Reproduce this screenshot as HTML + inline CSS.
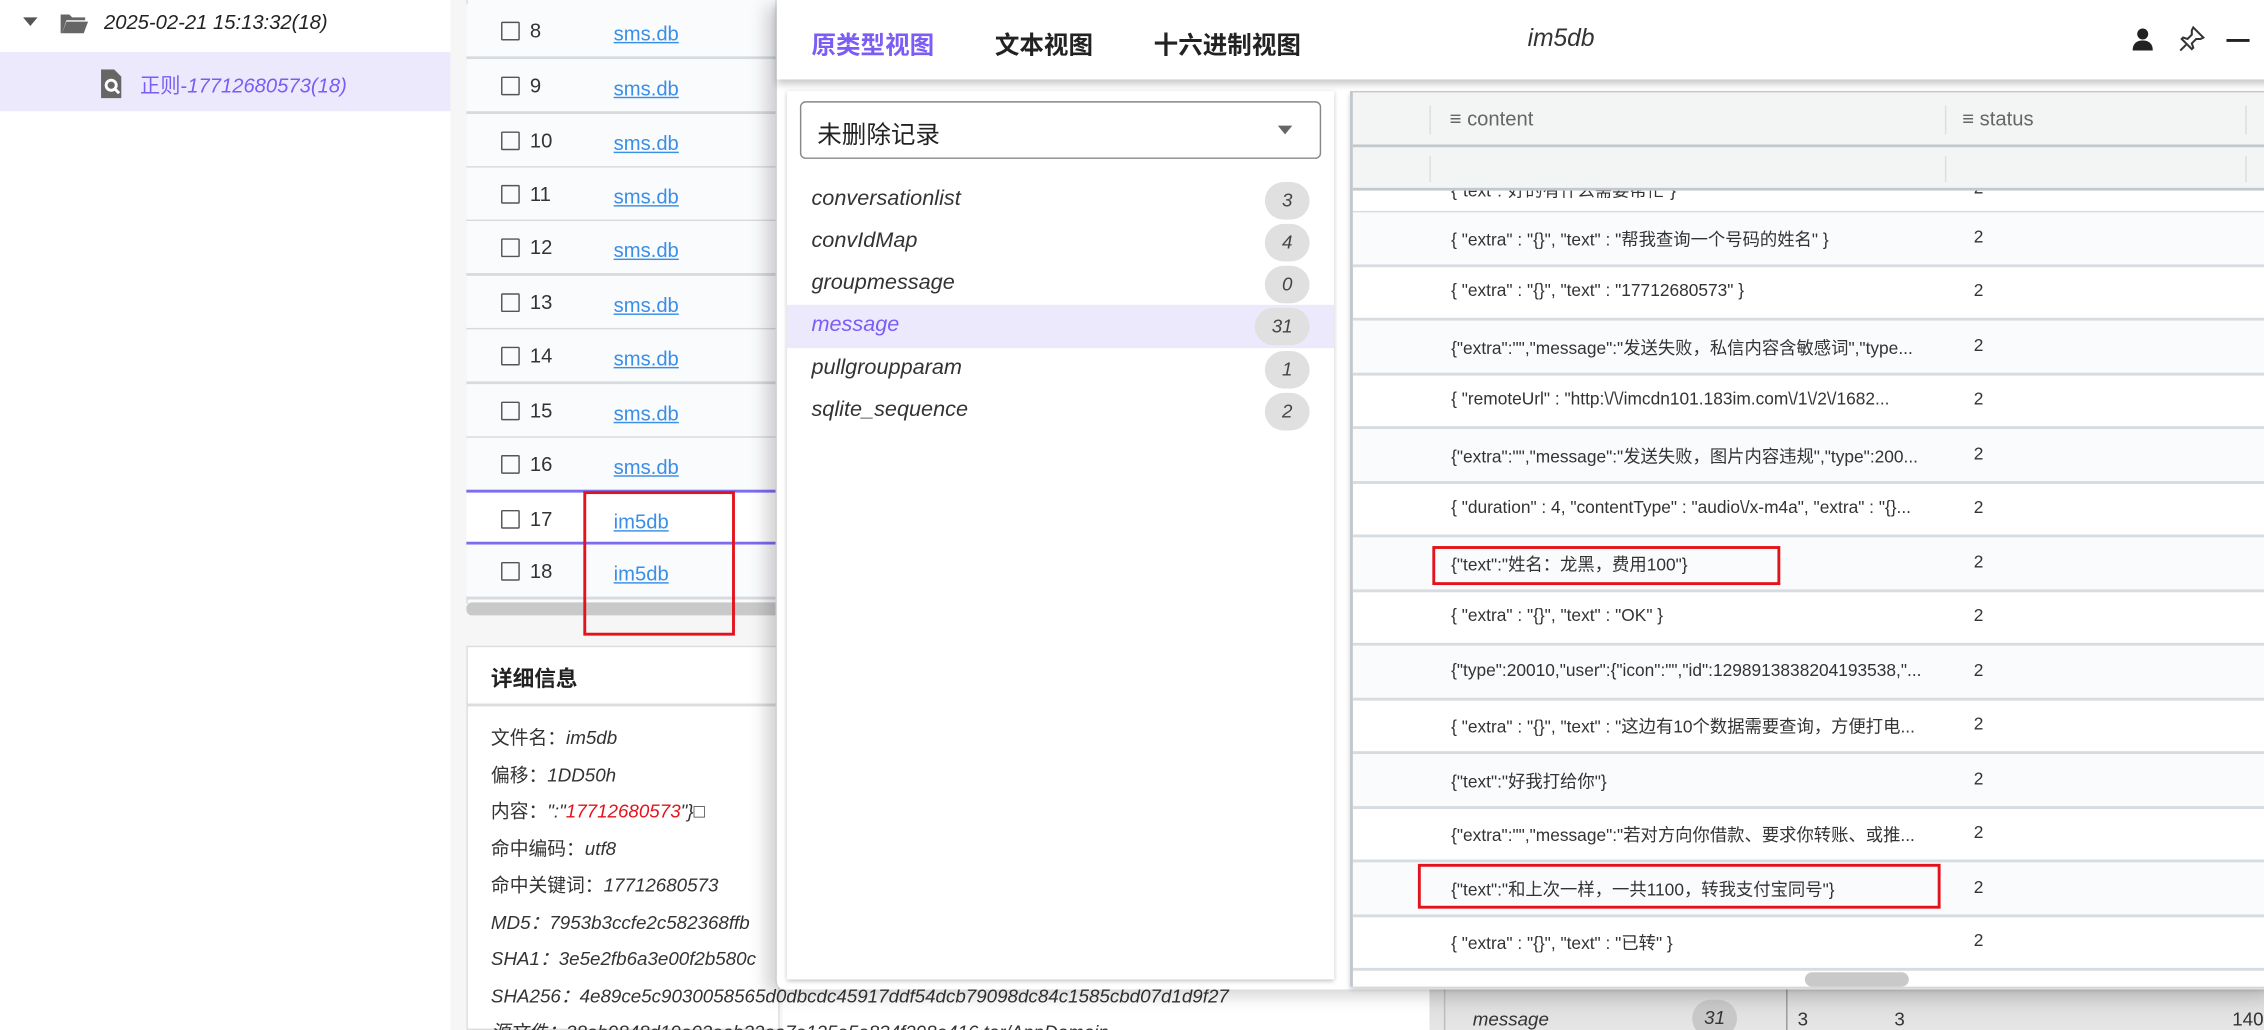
<!DOCTYPE html>
<html><head><meta charset="utf-8"><style>
*{box-sizing:border-box;margin:0;padding:0}
html,body{width:2264px;height:1030px;overflow:hidden;background:#fff}
body{font-family:"Liberation Sans","Noto Sans CJK SC",sans-serif;color:#333}
#w{position:absolute;left:0;top:0;width:1568px;height:713px;transform:scale(1.44388,1.44460);transform-origin:0 0;overflow:hidden;background:#fff}
.a{position:absolute}
.it{font-style:italic}
.row{position:absolute;left:323px;width:217px;height:38px;border-bottom:2px solid #d6dbe0;background:#fafbfd}
.cb{position:absolute;left:24px;top:12px;width:13px;height:13px;border:1.5px solid #555;border-radius:1px}
.num{position:absolute;left:44px;top:10px;font-size:14px;color:#333}
.lk{position:absolute;left:102px;top:12px;font-size:14px;color:#3a8ee6;text-decoration:underline}
.dl{position:absolute;left:340px;font-size:13px;color:#333;white-space:nowrap}
.li{position:absolute;left:562px;font-size:15px;font-style:italic;color:#333}
.bd{position:absolute;left:876px;width:31px;height:26px;border-radius:13px;background:#e0e0e0;font-size:13px;font-style:italic;text-align:center;line-height:26px;color:#444}
.tr{position:absolute;left:937px;width:631px;height:38px;border-bottom:2px solid #d7dce1}
.tr .c{position:absolute;left:68px;top:10px;font-size:12px;color:#333;white-space:nowrap}
.tr .s{position:absolute;left:430px;top:10px;font-size:12px;color:#333}
.red{position:absolute;border:2px solid #e3131b}
</style></head><body><div id="w">
<div class="a" style="left:0;top:0;width:312px;height:713px;background:#fff"></div>
<div class="a" style="left:16px;top:12px;width:0;height:0;border-left:5px solid transparent;border-right:5px solid transparent;border-top:6px solid #555"></div>
<svg class="a" style="left:41px;top:8px" width="20" height="16" viewBox="0 0 20 16"><path d="M1 2h6l2 2h9v2H5l-3 9H1z" fill="#666"/><path d="M5 7h15l-3 8H2z" fill="#666"/></svg>
<div class="a it" style="left:72px;top:7px;font-size:14px;color:#222">2025-02-21 15:13:32(18)</div>
<div class="a" style="left:0;top:36px;width:312px;height:41px;background:#ede9fc"></div>
<svg class="a" style="left:68px;top:48px" width="18" height="20" viewBox="0 0 18 20"><path d="M2 0h9l5 5v15H2z" fill="#666"/><circle cx="9" cy="11" r="3.5" fill="none" stroke="#fff" stroke-width="2"/><path d="M11.5 13.5l3 3" stroke="#fff" stroke-width="2"/></svg>
<div class="a" style="left:97px;top:49px;font-size:14px;color:#7b5cf5">正则-<span class="it">17712680573(18)</span></div>
<div class="a" style="left:312px;top:0;width:230px;height:713px;background:#f6f6f6"></div>
<div class="a" style="left:323px;top:0;width:217px;height:418px;background:#fafbfd;border-left:1px solid #ddd"></div>
<div class="row" style="top:3px"><div class="cb"></div><div class="num">8</div><div class="lk">sms.db</div></div>
<div class="row" style="top:41px"><div class="cb"></div><div class="num">9</div><div class="lk">sms.db</div></div>
<div class="row" style="top:79px"><div class="cb"></div><div class="num">10</div><div class="lk">sms.db</div></div>
<div class="row" style="top:116px"><div class="cb"></div><div class="num">11</div><div class="lk">sms.db</div></div>
<div class="row" style="top:153px"><div class="cb"></div><div class="num">12</div><div class="lk">sms.db</div></div>
<div class="row" style="top:191px"><div class="cb"></div><div class="num">13</div><div class="lk">sms.db</div></div>
<div class="row" style="top:228px"><div class="cb"></div><div class="num">14</div><div class="lk">sms.db</div></div>
<div class="row" style="top:266px"><div class="cb"></div><div class="num">15</div><div class="lk">sms.db</div></div>
<div class="row" style="top:303px"><div class="cb"></div><div class="num">16</div><div class="lk">sms.db</div></div>
<div class="row" style="top:339px;background:#fff;border-top:2px solid #7b6cf0;border-bottom:2px solid #7b6cf0"><div class="cb"></div><div class="num">17</div><div class="lk">im5db</div></div>
<div class="row" style="top:377px"><div class="cb"></div><div class="num">18</div><div class="lk">im5db</div></div>
<div class="a" style="left:323px;top:417px;width:217px;height:9px;background:#c9c9c9;border-radius:4px"></div>
<div class="red" style="left:404px;top:340px;width:105px;height:100px"></div>
<div class="a" style="left:323px;top:447px;width:217px;height:266px;background:#fff;border:1px solid #ddd"></div>
<div class="a" style="left:323px;top:487px;width:217px;height:2px;background:#ddd"></div>
<div class="a" style="left:340px;top:459px;font-size:15px;font-weight:bold;color:#222">详细信息</div>
<div class="dl" style="top:500px">文件名：<span class="it">im5db</span></div>
<div class="dl" style="top:526px">偏移：<span class="it">1DD50h</span></div>
<div class="dl" style="top:551px">内容：<span class="it">":"<span style="color:#e3131b">17712680573</span>"}&#9633;</span></div>
<div class="dl" style="top:577px">命中编码：<span class="it">utf8</span></div>
<div class="dl" style="top:602px">命中关键词：<span class="it">17712680573</span></div>
<div class="dl it" style="top:628px">MD5：7953b3ccfe2c582368ffb</div>
<div class="dl it" style="top:653px">SHA1：3e5e2fb6a3e00f2b580c</div>
<div class="dl it" style="top:679px">SHA256：4e89ce5c9030058565d0dbcdc45917ddf54dcb79098dc84c1585cbd07d1d9f27</div>
<div class="dl it" style="top:704px">源文件：38eb9848d19e02eab32ea7e125e5e834f298e416.tar/AppDomain</div>
<div class="a" style="left:990px;top:683px;width:578px;height:30px;background:linear-gradient(#d8d8d8,#e6e6e6)"></div>
<div class="a" style="left:1000px;top:683px;width:1px;height:30px;background:#bbb"></div>
<div class="a" style="left:1237px;top:683px;width:1px;height:30px;background:#999"></div>
<div class="a it" style="left:1020px;top:698px;font-size:13px;color:#333">message</div>
<div class="a it" style="left:1172px;top:692px;width:31px;height:26px;border-radius:13px;background:#c8c8c8;font-size:13px;text-align:center;line-height:26px">31</div>
<div class="a" style="left:1245px;top:698px;font-size:13px">3</div>
<div class="a" style="left:1312px;top:698px;font-size:13px">3</div>
<div class="a" style="left:1546px;top:698px;font-size:13px">140</div>
<div class="a" style="left:537px;top:0;width:1040px;height:685px;background:#fff;border-left:1px solid #ccc;border-radius:0 0 0 6px;box-shadow:-6px 4px 12px rgba(0,0,0,.18)"></div>
<div class="a" style="left:538px;top:0;width:1040px;height:55px;background:#fff;box-shadow:0 3px 5px rgba(0,0,0,.22)"></div>
<div class="a" style="left:562px;top:17px;font-size:17px;font-weight:bold;color:#7b5cf5">原类型视图</div>
<div class="a" style="left:689px;top:17px;font-size:17px;font-weight:bold;color:#222">文本视图</div>
<div class="a" style="left:799px;top:17px;font-size:17px;font-weight:bold;color:#222">十六进制视图</div>
<div class="a it" style="left:1058px;top:17px;font-size:17px;color:#333">im5db</div>
<svg class="a" style="left:1477px;top:19px" width="14" height="16" viewBox="0 0 14 16"><circle cx="7" cy="4.5" r="3.8" fill="#222"/><path d="M0 16c0-5 3-7 7-7s7 2 7 7z" fill="#222"/></svg>
<svg class="a" style="left:1508px;top:17px" width="20" height="20" viewBox="0 0 20 20" fill="none" stroke="#333" stroke-width="1.4"><path d="M11 2l7 7-2 1-3 0-3 3 1 3-1 1-7-7 1-1 3 1 3-3 0-3z"/><path d="M6 14l-4 4"/></svg>
<div class="a" style="left:1542px;top:27px;width:16px;height:2px;background:#222"></div>
<div class="a" style="left:545px;top:63px;width:379px;height:615px;background:#fff;box-shadow:0 1px 3px rgba(0,0,0,.25)"></div>
<div class="a" style="left:554px;top:70px;width:361px;height:40px;border:1.5px solid #888;border-radius:4px"></div>
<div class="a" style="left:566px;top:79px;font-size:17px;color:#222">未删除记录</div>
<div class="a" style="left:885px;top:87px;width:0;height:0;border-left:5px solid transparent;border-right:5px solid transparent;border-top:6px solid #666"></div>
<div class="li" style="top:129px">conversationlist</div><div class="bd" style="top:126px">3</div>
<div class="li" style="top:158px">convIdMap</div><div class="bd" style="top:155px">4</div>
<div class="li" style="top:187px">groupmessage</div><div class="bd" style="top:184px">0</div>
<div class="a" style="left:545px;top:211px;width:379px;height:30px;background:#ede9fc"></div>
<div class="li" style="top:216px;color:#7b5cf5">message</div><div class="bd" style="top:213px;left:869px;width:38px">31</div>
<div class="li" style="top:246px">pullgroupparam</div><div class="bd" style="top:243px">1</div>
<div class="li" style="top:275px">sqlite_sequence</div><div class="bd" style="top:272px">2</div>
<div class="a" style="left:935px;top:63px;width:640px;height:620px;background:#fff;border-left:2px solid #c3c8cd;border-top:1px solid #c3c8cd;box-shadow:0 2px 3px rgba(0,0,0,.2)"></div>
<div class="a" style="left:937px;top:64px;width:631px;height:38px;background:#f3f5f5;border-bottom:2px solid #c3c8cd"></div>
<div class="a" style="left:937px;top:102px;width:631px;height:30px;background:#f3f5f5;border-bottom:2px solid #c3c8cd"></div>
<div class="a" style="left:990px;top:73px;width:1px;height:20px;background:#ddd"></div>
<div class="a" style="left:1347px;top:73px;width:1px;height:20px;background:#ddd"></div>
<div class="a" style="left:1555px;top:73px;width:1px;height:20px;background:#ddd"></div>
<div class="a" style="left:990px;top:108px;width:1px;height:18px;background:#ddd"></div>
<div class="a" style="left:1347px;top:108px;width:1px;height:18px;background:#ddd"></div>
<div class="a" style="left:1555px;top:108px;width:1px;height:18px;background:#ddd"></div>
<div class="a" style="left:1004px;top:74px;font-size:14px;color:#666">&#8801; content</div>
<div class="a" style="left:1359px;top:74px;font-size:14px;color:#666">&#8801; status</div>
<div class="tr" style="top:132px;height:16px;background:#fff;overflow:hidden"><div class="c" style="top:-9px">{"text":"好的有什么需要帮忙"}</div><div class="s" style="top:-9px">2</div></div>
<div class="tr" style="top:147px;background:#fafbfd"><div class="c">{ "extra" : "{}", "text" : "帮我查询一个号码的姓名" }</div><div class="s">2</div></div>
<div class="tr" style="top:184px"><div class="c">{ "extra" : "{}", "text" : "17712680573" }</div><div class="s">2</div></div>
<div class="tr" style="top:222px;background:#fafbfd"><div class="c">{"extra":"","message":"发送失败，私信内容含敏感词","type...</div><div class="s">2</div></div>
<div class="tr" style="top:259px"><div class="c">{ "remoteUrl" : "http:\/\/imcdn101.183im.com\/1\/2\/1682...</div><div class="s">2</div></div>
<div class="tr" style="top:297px;background:#fafbfd"><div class="c">{"extra":"","message":"发送失败，图片内容违规","type":200...</div><div class="s">2</div></div>
<div class="tr" style="top:334px"><div class="c">{ "duration" : 4, "contentType" : "audio\/x-m4a", "extra" : "{}...</div><div class="s">2</div></div>
<div class="tr" style="top:372px;background:#fafbfd"><div class="c">{"text":"姓名：龙黑，费用100"}</div><div class="s">2</div></div>
<div class="tr" style="top:409px"><div class="c">{ "extra" : "{}", "text" : "OK" }</div><div class="s">2</div></div>
<div class="tr" style="top:447px;background:#fafbfd"><div class="c">{"type":20010,"user":{"icon":"","id":1298913838204193538,"...</div><div class="s">2</div></div>
<div class="tr" style="top:484px"><div class="c">{ "extra" : "{}", "text" : "这边有10个数据需要查询，方便打电...</div><div class="s">2</div></div>
<div class="tr" style="top:522px;background:#fafbfd"><div class="c">{"text":"好我打给你"}</div><div class="s">2</div></div>
<div class="tr" style="top:559px"><div class="c">{"extra":"","message":"若对方向你借款、要求你转账、或推...</div><div class="s">2</div></div>
<div class="tr" style="top:597px;background:#fafbfd"><div class="c">{"text":"和上次一样，一共1100，转我支付宝同号"}</div><div class="s">2</div></div>
<div class="tr" style="top:634px"><div class="c">{ "extra" : "{}", "text" : "已转" }</div><div class="s">2</div></div>
<div class="a" style="left:1250px;top:673px;width:72px;height:10px;border-radius:5px;background:#c9c9c9"></div>
<div class="red" style="left:992px;top:378px;width:241px;height:27px"></div>
<div class="red" style="left:982px;top:598px;width:362px;height:31px"></div>
</div></body></html>
